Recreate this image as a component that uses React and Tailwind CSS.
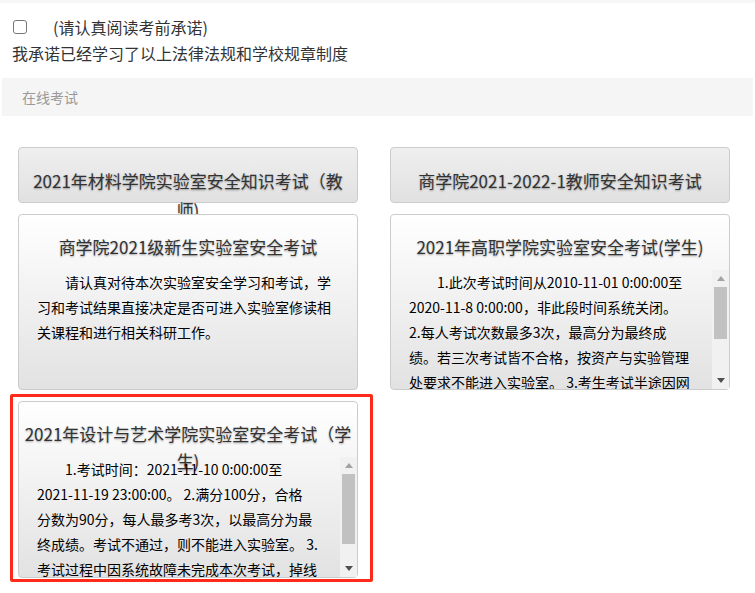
import React from 'react'

const cnFont = "font-['Microsoft_YaHei','Noto_Sans_CJK_SC',sans-serif]"

const LEFT_NOTICE = [
  '请认真对待本次实验室安全学习和考试，学',
  '习和考试结果直接决定是否可进入实验室修读相',
  '关课程和进行相关科研工作。',
]

const VOC_NOTICE = [
  '1.此次考试时间从2010-11-01 0:00:00至',
  '2020-11-8 0:00:00，非此段时间系统关闭。',
  '2.每人考试次数最多3次，最高分为最终成',
  '绩。若三次考试皆不合格，按资产与实验管理',
  '处要求不能进入实验室。 3.考生考试半途因网',
  '络故障等原因中断考试，可重新登录继续答题。',
]

const ART_NOTICE = [
  '1.考试时间：2021-11-10 0:00:00至',
  '2021-11-19 23:00:00。 2.满分100分，合格',
  '分数为90分，每人最多考3次，以最高分为最',
  '终成绩。考试不通过，则不能进入实验室。 3.',
  '考试过程中因系统故障未完成本次考试，掉线',
  '后可重新登录继续考试。',
]

function ExamButton({ title }) {
  return (
    <div className="h-[56px] rounded-[4px] border border-[#cccccc] bg-gradient-to-b from-[#efefef] to-[#e1e1e1] px-[12px] pt-[18px] text-center text-[17px] leading-[29px] text-[#333] [text-shadow:0_1px_2px_rgba(0,0,0,0.35)]">
      {title}
    </div>
  )
}

function ScrollBar({ thumb }) {
  return (
    <div className="w-[17px] shrink-0 bg-[#f1f1f1] flex flex-col">
      <div className="h-[17px] flex items-center justify-center">
        <svg width="8" height="5" viewBox="0 0 8 5">
          <polygon points="0,5 8,5 4,0" fill="#a3a3a3" />
        </svg>
      </div>
      <div className="flex-1 px-[2px]">
        <div className="bg-[#c1c1c1]" style={{ height: thumb }} />
      </div>
      <div className="h-[17px] flex items-center justify-center">
        <svg width="8" height="5" viewBox="0 0 8 5">
          <polygon points="0,0 8,0 4,5" fill="#505050" />
        </svg>
      </div>
    </div>
  )
}

function ExamCard({ title, lines, thumb, tall }) {
  return (
    <div
      className={
        'flex flex-col rounded-[4px] border border-[#cccccc] bg-gradient-to-b from-white to-[#e2e2e2] ' +
        (tall ? 'h-[177px]' : 'h-[176px]')
      }
    >
      <div className="h-[55px] shrink-0 px-[4px] pt-[18px] text-center text-[17px] leading-[27px] text-[#333] [text-shadow:0_1px_2px_rgba(0,0,0,0.35)]">
        {title}
      </div>
      <div className="flex min-h-0 flex-1">
        <div className="flex-1 overflow-hidden pl-[18px] pr-[8px] text-[14px] leading-[25px] text-[#000]">
          {lines.map((line, i) => (
            <div key={i} className={'whitespace-pre ' + (i === 0 ? 'pl-[28px]' : '')}>
              {line}
            </div>
          ))}
        </div>
        {thumb && <ScrollBar thumb={thumb} />}
      </div>
    </div>
  )
}

export default function App() {
  return (
    <div className={'min-h-[593px] bg-white ' + cnFont}>
      <div className="h-[3px] bg-[#f6f6f6]" />

      <div className="pl-[12px] pt-[11px] text-[16px] leading-[26px] text-[#333]">
        <div className="flex items-center">
          <span className="ml-[1px] h-[14px] w-[14px] rounded-[3px] border border-[#767676] bg-white" />
          <span className="ml-[26px]">(请认真阅读考前承诺)</span>
        </div>
        <div>我承诺已经学习了以上法律法规和学校规章制度</div>
      </div>

      <div className="mx-[2px] mt-[12px] flex h-[38px] items-center bg-[#f5f5f5] pl-[20px] text-[14px] text-[#999]">
        在线考试
      </div>

      <div className="mt-[31px] grid grid-cols-[340px_340px] gap-x-[32px] gap-y-[11px] pl-[18px]">
        <ExamButton title="2021年材料学院实验室安全知识考试（教师)" />
        <ExamButton title="商学院2021-2022-1教师安全知识考试" />
        <ExamCard title="商学院2021级新生实验室安全考试" lines={LEFT_NOTICE} />
        <ExamCard title="2021年高职学院实验室安全考试(学生)" lines={VOC_NOTICE} thumb={52} />
        <div className="relative">
          <ExamCard title="2021年设计与艺术学院实验室安全考试（学生)" lines={ART_NOTICE} thumb={70} tall />
          <div className="pointer-events-none absolute -left-[8px] -top-[7px] -right-[15px] -bottom-[4px] rounded-[2px] border-[3px] border-[#ff2a1a]" />
        </div>
      </div>
    </div>
  )
}
